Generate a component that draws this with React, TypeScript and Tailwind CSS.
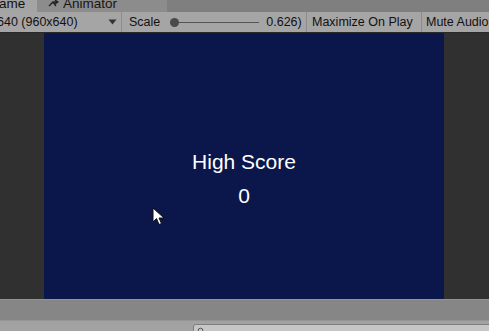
import React from 'react';

const font = { fontFamily: '"Liberation Sans", Arial, sans-serif' };

export default function App() {
  return (
    <div className="w-[489px] h-[331px] overflow-hidden flex flex-col bg-[#a2a2a2] text-[#111]" style={font}>
      {/* Tabs */}
      <div className="h-[12px] flex bg-[#7f7f7f] overflow-hidden shrink-0">
        <div className="w-[37px] bg-[#a4a4a4] text-[13.5px] leading-[14px] -mt-[3px] overflow-hidden whitespace-nowrap">
          <span className="-ml-[1px]">ame</span>
        </div>
        <div className="w-[130px] bg-[#8c8c8c] flex items-start -mt-[3px] pl-[11px] text-[13.5px] leading-[14px] text-[#161616]">
          <svg width="11" height="10" viewBox="0 0 11 10" className="mt-[2px] mr-[4px]">
            <path d="M1 7 L5 3 L10 3 M7 1 L10 3 L7 5 M5 3 L8 7" stroke="#222" strokeWidth="1.3" fill="none" />
          </svg>
          <span>Animator</span>
        </div>
      </div>

      {/* Toolbar */}
      <div className="h-[21px] flex items-center bg-[#a5a5a5] text-[12.5px] shrink-0 border-b border-[#2a2a2a] whitespace-nowrap">
        <div className="w-[122px] h-full flex items-center justify-between border-r border-[#8c8c8c] pr-[4px] overflow-hidden">
          <span className="-ml-[3px]">640 (960x640)</span>
          <svg width="9" height="6" viewBox="0 0 9 6">
            <path d="M0.5 0.5 L8.5 0.5 L4.5 5.5 Z" fill="#333" />
          </svg>
        </div>
        <div className="w-[185px] h-full flex items-center pl-[7px] border-r border-[#8c8c8c] overflow-hidden">
          <span>Scale</span>
          <div className="relative ml-[10px] w-[89px] h-[10px] flex items-center shrink-0">
            <div className="w-full h-[1px] bg-[#555]" />
            <div className="absolute left-0 top-[0.5px] w-[9px] h-[9px] rounded-full bg-[#4a4a4a]" />
          </div>
          <span className="ml-[7px]">0.626)</span>
        </div>
        <div className="w-[115px] h-full flex items-center pl-[5px] border-r border-[#8c8c8c]">
          <span>Maximize On Play</span>
        </div>
        <div className="flex-1 h-full flex items-center pl-[4px] overflow-hidden">
          <span>Mute Audio</span>
        </div>
      </div>

      {/* Game view */}
      <div className="h-[266px] flex bg-[#303030] shrink-0">
        <div className="w-[44px]" />
        <div className="relative w-[400px] h-full bg-[#0b174a] flex flex-col items-center text-white">
          <div className="mt-[117px] text-[21px] leading-[24px]">High Score</div>
          <div className="mt-[10px] text-[21px] leading-[24px]">0</div>
          <svg className="absolute left-[108px] top-[174px]" width="14" height="20" viewBox="0 0 14 20">
            <path d="M1 1 L1 15 L4.5 11.5 L7 17.5 L9.5 16.5 L7 11 L12 11 Z" fill="#fff" stroke="#111" strokeWidth="1" strokeLinejoin="round" />
          </svg>
        </div>
      </div>

      {/* Bottom panel */}
      <div className="h-[22px] bg-[#868686] border-t border-[#5c5c5c] border-b border-[#959595] shrink-0" />
      <div className="flex-1 relative bg-[#a2a2a2]">
        <div className="absolute left-[193px] top-[3px] w-[310px] h-[20px] rounded-[3px] bg-[#c6c6c6] border border-[#7e7e7e]">
          <svg className="absolute left-[3px] top-[2px]" width="8" height="8" viewBox="0 0 8 8">
            <circle cx="3.5" cy="3.5" r="2.3" stroke="#555" strokeWidth="1" fill="none" />
          </svg>
        </div>
      </div>
    </div>
  );
}
